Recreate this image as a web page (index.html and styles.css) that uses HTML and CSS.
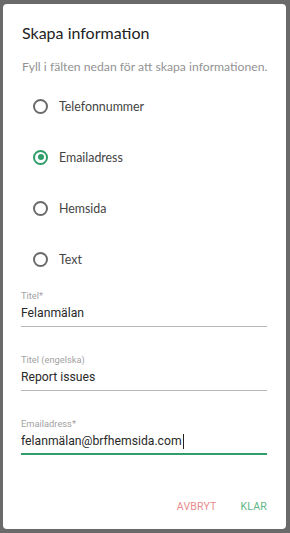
FILE: index.html
```html
<!DOCTYPE html>
<html lang="sv">
<head>
<meta charset="utf-8">
<link rel="stylesheet" href="styles.css">
</head>
<body>
<div class="dialog">
  <h1 class="title">Skapa information</h1>
  <p class="subtitle">Fyll i fälten nedan för att skapa informationen.</p>
  <div class="radios">
    <div class="radio"><span class="circle"></span><span class="rlabel">Telefonnummer</span></div>
    <div class="radio checked"><span class="circle"></span><span class="rlabel">Emailadress</span></div>
    <div class="radio"><span class="circle"></span><span class="rlabel">Hemsida</span></div>
    <div class="radio"><span class="circle"></span><span class="rlabel">Text</span></div>
  </div>
  <div class="fields">
    <div class="field">
      <div class="flabel">Titel*</div>
      <div class="fvalue">Felanmälan</div>
    </div>
    <div class="field">
      <div class="flabel">Titel (engelska)</div>
      <div class="fvalue">Report issues</div>
    </div>
    <div class="field focused">
      <div class="flabel">Emailadress*</div>
      <div class="fvalue">felanmälan@brfhemsida.com<span class="caret"></span></div>
    </div>
  </div>
  <div class="actions">
    <span class="btn cancel">AVBRYT</span>
    <span class="btn ok">KLAR</span>
  </div>
</div>
</body>
</html>
```
FILE: styles.css
```css
html, body {
  margin: 0;
  padding: 0;
  background: #6a6a6a;
  height: 533px;
  overflow: hidden;
}
.dialog {
  margin: 4px 4px 0 3px;
  height: 525px;
  background: #fff;
  border-radius: 4px;
  box-sizing: border-box;
  padding: 18px 19px 0 18px;
  display: flex;
  flex-direction: column;
  font-family: Lato, "Noto Sans", sans-serif;
}
.title {
  margin: 0 0 0 1px;
  font-weight: 400;
  font-size: 16px;
  line-height: 22px;
  color: #222;
}
.subtitle {
  margin: 15px -10px 0 1px;
  font-size: 12.2px;
  line-height: 16px;
  color: #939393;
  white-space: nowrap;
}
.radios {
  margin-top: 22px;
  display: flex;
  flex-direction: column;
  gap: 33px;
  padding-left: 12px;
}
.radio {
  display: flex;
  align-items: center;
  height: 18px;
}
.circle {
  width: 11px;
  height: 11px;
  border: 2px solid #6b6b6b;
  border-radius: 50%;
  box-sizing: content-box;
  position: relative;
}
.checked .circle {
  border-color: #2f9e6b;
}
.checked .circle::after {
  content: "";
  position: absolute;
  left: 2.5px;
  top: 2.5px;
  width: 6px;
  height: 6px;
  border-radius: 50%;
  background: #2f9e6b;
}
.rlabel {
  margin-left: 11px;
  font-size: 12.4px;
  color: #444;
}
.fields {
  margin-top: 22px;
  display: flex;
  flex-direction: column;
  gap: 27px;
  font-family: Roboto, sans-serif;
}
.field {
  border-bottom: 1px solid #b8b8b8;
  padding-bottom: 4px;
}
.flabel {
  font-size: 9.3px;
  line-height: 11px;
  color: #a2a2a2;
}
.fvalue {
  margin-top: 4px;
  font-size: 12.2px;
  line-height: 17px;
  color: #2a2a2a;
  display: flex;
  align-items: center;
}
.focused {
  border-bottom: 2px solid #2f9e6b;
  padding-bottom: 3px;
}
.caret {
  display: inline-block;
  width: 1px;
  height: 15px;
  background: #222;
  margin-left: 1px;
}
.actions {
  margin-top: auto;
  margin-bottom: 16px;
  display: flex;
  justify-content: flex-end;
  gap: 24px;
  font-family: Roboto, sans-serif;
  font-size: 10.5px;
  letter-spacing: 0.2px;
}
.cancel { color: #e78b8e; }
.ok { color: #5fb68a; }
```
